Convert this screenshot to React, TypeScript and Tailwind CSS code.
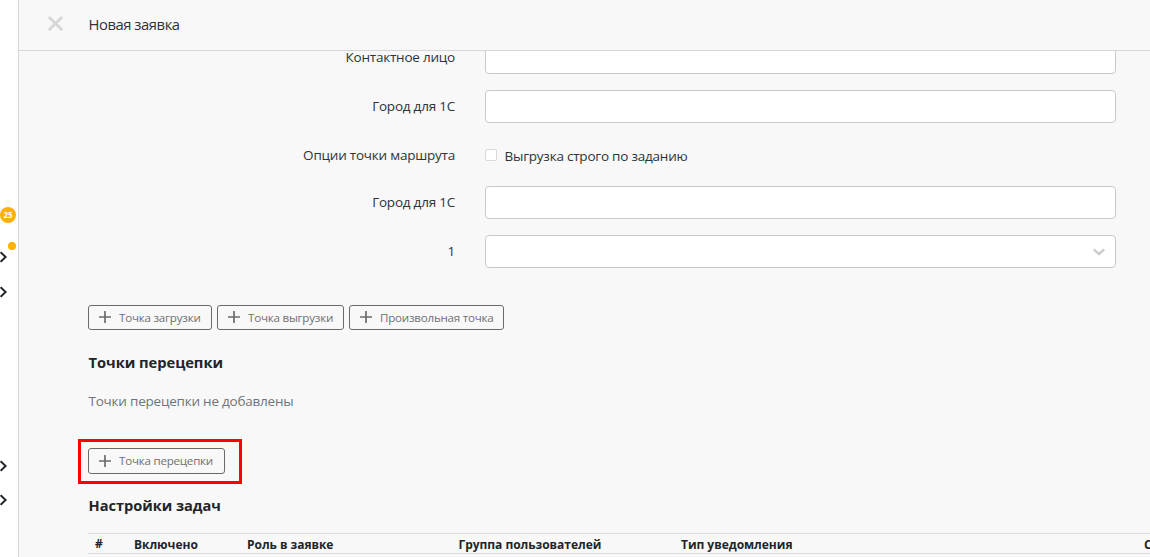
import type { ReactNode } from "react";

function Plus() {
  return (
    <svg width="12" height="12" viewBox="0 0 12 12" className="mb-px shrink-0" stroke="#6a6a6a" strokeWidth="1.7" strokeLinecap="round" fill="none">
      <path d="M6 0.6V11.4M0.6 6H11.4" />
    </svg>
  );
}

function AddButton({ size, children }: { size: string; children: ReactNode }) {
  return (
    <button className={`flex shrink-0 items-center rounded-[3px] border border-[#6a6a6a] pl-[10px] ${size}`}>
      <Plus />
      <span className="ml-2 whitespace-nowrap text-[11.6px] leading-[18px] tracking-[-0.23px] text-[#707070]">{children}</span>
    </button>
  );
}

function Row({ label, height = "h-[33px]", children }: { label: string; height?: string; children: ReactNode }) {
  return (
    <div className={`flex shrink-0 ${height}`}>
      <div className="w-[367px] shrink-0 whitespace-nowrap pt-[6px] text-right leading-5">{label}</div>
      <div className="ml-[30px] w-[631px] shrink-0">{children}</div>
    </div>
  );
}

function Input({ children }: { children?: ReactNode }) {
  return <div className="flex h-[33px] items-center justify-end rounded-[4px] border border-[#c9c9c9] bg-white pr-[10px]">{children}</div>;
}

function Chevron({ gap }: { gap: string }) {
  return (
    <svg width="8" height="12" viewBox="0 0 8 12" className={`shrink-0 ${gap}`} fill="none" stroke="#212529" strokeWidth="2">
      <path d="M0.6 1.2L5.6 6L0.6 10.8" />
    </svg>
  );
}

export default function App() {
  return (
    <div className="flex h-[557px] w-[1150px] overflow-hidden bg-[#f8f8f8] font-['Open_Sans','Noto_Sans',sans-serif] text-[13.5px] tracking-[-0.22px] text-[#2f3337]">
      <aside className="flex w-[18px] shrink-0 flex-col bg-white">
        <div className="mt-[207px] flex h-4 w-4 shrink-0 items-center justify-center rounded-full bg-[#ffb000] text-[8px] font-bold leading-none tracking-normal text-white">
          25
        </div>
        <div className="ml-2 mt-[19px] h-2 w-2 shrink-0 rounded-full bg-[#ffb000]" />
        <Chevron gap="mt-[1px]" />
        <Chevron gap="mt-[23px]" />
        <Chevron gap="mt-[162px]" />
        <Chevron gap="mt-[22px]" />
      </aside>
      <div className="flex min-w-0 flex-1 flex-col border-l border-[#d6d6d6]">
        <header className="flex h-[51px] shrink-0 items-center border-b border-[#d6d6d6]">
          <svg width="15" height="15" viewBox="0 0 15 15" className="mb-[4px] ml-[29px]" fill="none" stroke="#d6d6d6" strokeWidth="2.9" strokeLinecap="round">
            <path d="M1.7 1.7L13.3 13.3M13.3 1.7L1.7 13.3" />
          </svg>
          <h1 className="mb-[2px] ml-[25.5px] whitespace-nowrap text-[14.8px] leading-5 tracking-[-0.45px]">Новая заявка</h1>
        </header>
        <main className="min-h-0 flex-1 overflow-hidden pl-[69px]">
          <div className="-mt-[10px] flex flex-col gap-4">
            <Row label="Контактное лицо"><Input /></Row>
            <Row label="Город для 1С"><Input /></Row>
            <Row label="Опции точки маршрута" height="h-[31px]">
              <label className="flex items-start pt-[7px]">
                <span className="mt-[3px] h-3 w-3 rounded-[2px] border border-[#d9d9d9] bg-white" />
                <span className="ml-[7.5px] whitespace-nowrap leading-5">Выгрузка строго по заданию</span>
              </label>
            </Row>
            <Row label="Город для 1С"><Input /></Row>
            <Row label="1">
              <Input>
                <svg width="12" height="8" viewBox="0 0 12 8" fill="none" stroke="#cccccc" strokeWidth="2.4">
                  <path d="M0.8 1.3L6 6.2L11.2 1.3" />
                </svg>
              </Input>
            </Row>
          </div>
          <div className="mt-[37px] flex gap-[5px]">
            <AddButton size="h-[25px] w-[124px]">Точка загрузки</AddButton>
            <AddButton size="h-[25px] w-[127px]">Точка выгрузки</AddButton>
            <AddButton size="h-[25px] w-[155px]">Произвольная точка</AddButton>
          </div>
          <h2 className="mt-[21px] whitespace-nowrap pl-[0.5px] text-[14.7px] font-bold leading-[22px] tracking-[-0.03px] text-[#212529]">Точки перецепки</h2>
          <p className="mt-[18px] whitespace-nowrap pl-[0.5px] leading-5 text-[#6c757d]">Точки перецепки не добавлены</p>
          <div className="-ml-[10px] mt-[28px] h-[45px] w-[164px] border-[3px] border-[#ff0000] pl-[7px] pt-[6px]">
            <AddButton size="h-[26px] w-[137px]">Точка перецепки</AddButton>
          </div>
          <h2 className="mt-[10px] whitespace-nowrap pl-[0.5px] text-[14.6px] font-bold leading-[22px] tracking-[-0.03px] text-[#212529]">Настройки задач</h2>
          <div className="mt-[17px] flex h-[21px] whitespace-nowrap border-y border-[#d9dbdd] pl-[7px] text-[12px] font-bold leading-[21px] tracking-[-0.04px] text-[#212529]">
            <div className="w-[39px] shrink-0 leading-[20px]">#</div>
            <div className="w-[113px] shrink-0">Включено</div>
            <div className="w-[211.5px] shrink-0">Роль в заявке</div>
            <div className="w-[222.5px] shrink-0">Группа пользователей</div>
            <div className="w-[463px] shrink-0">Тип уведомления</div>
            <div className="shrink-0">С</div>
          </div>
        </main>
      </div>
    </div>
  );
}
